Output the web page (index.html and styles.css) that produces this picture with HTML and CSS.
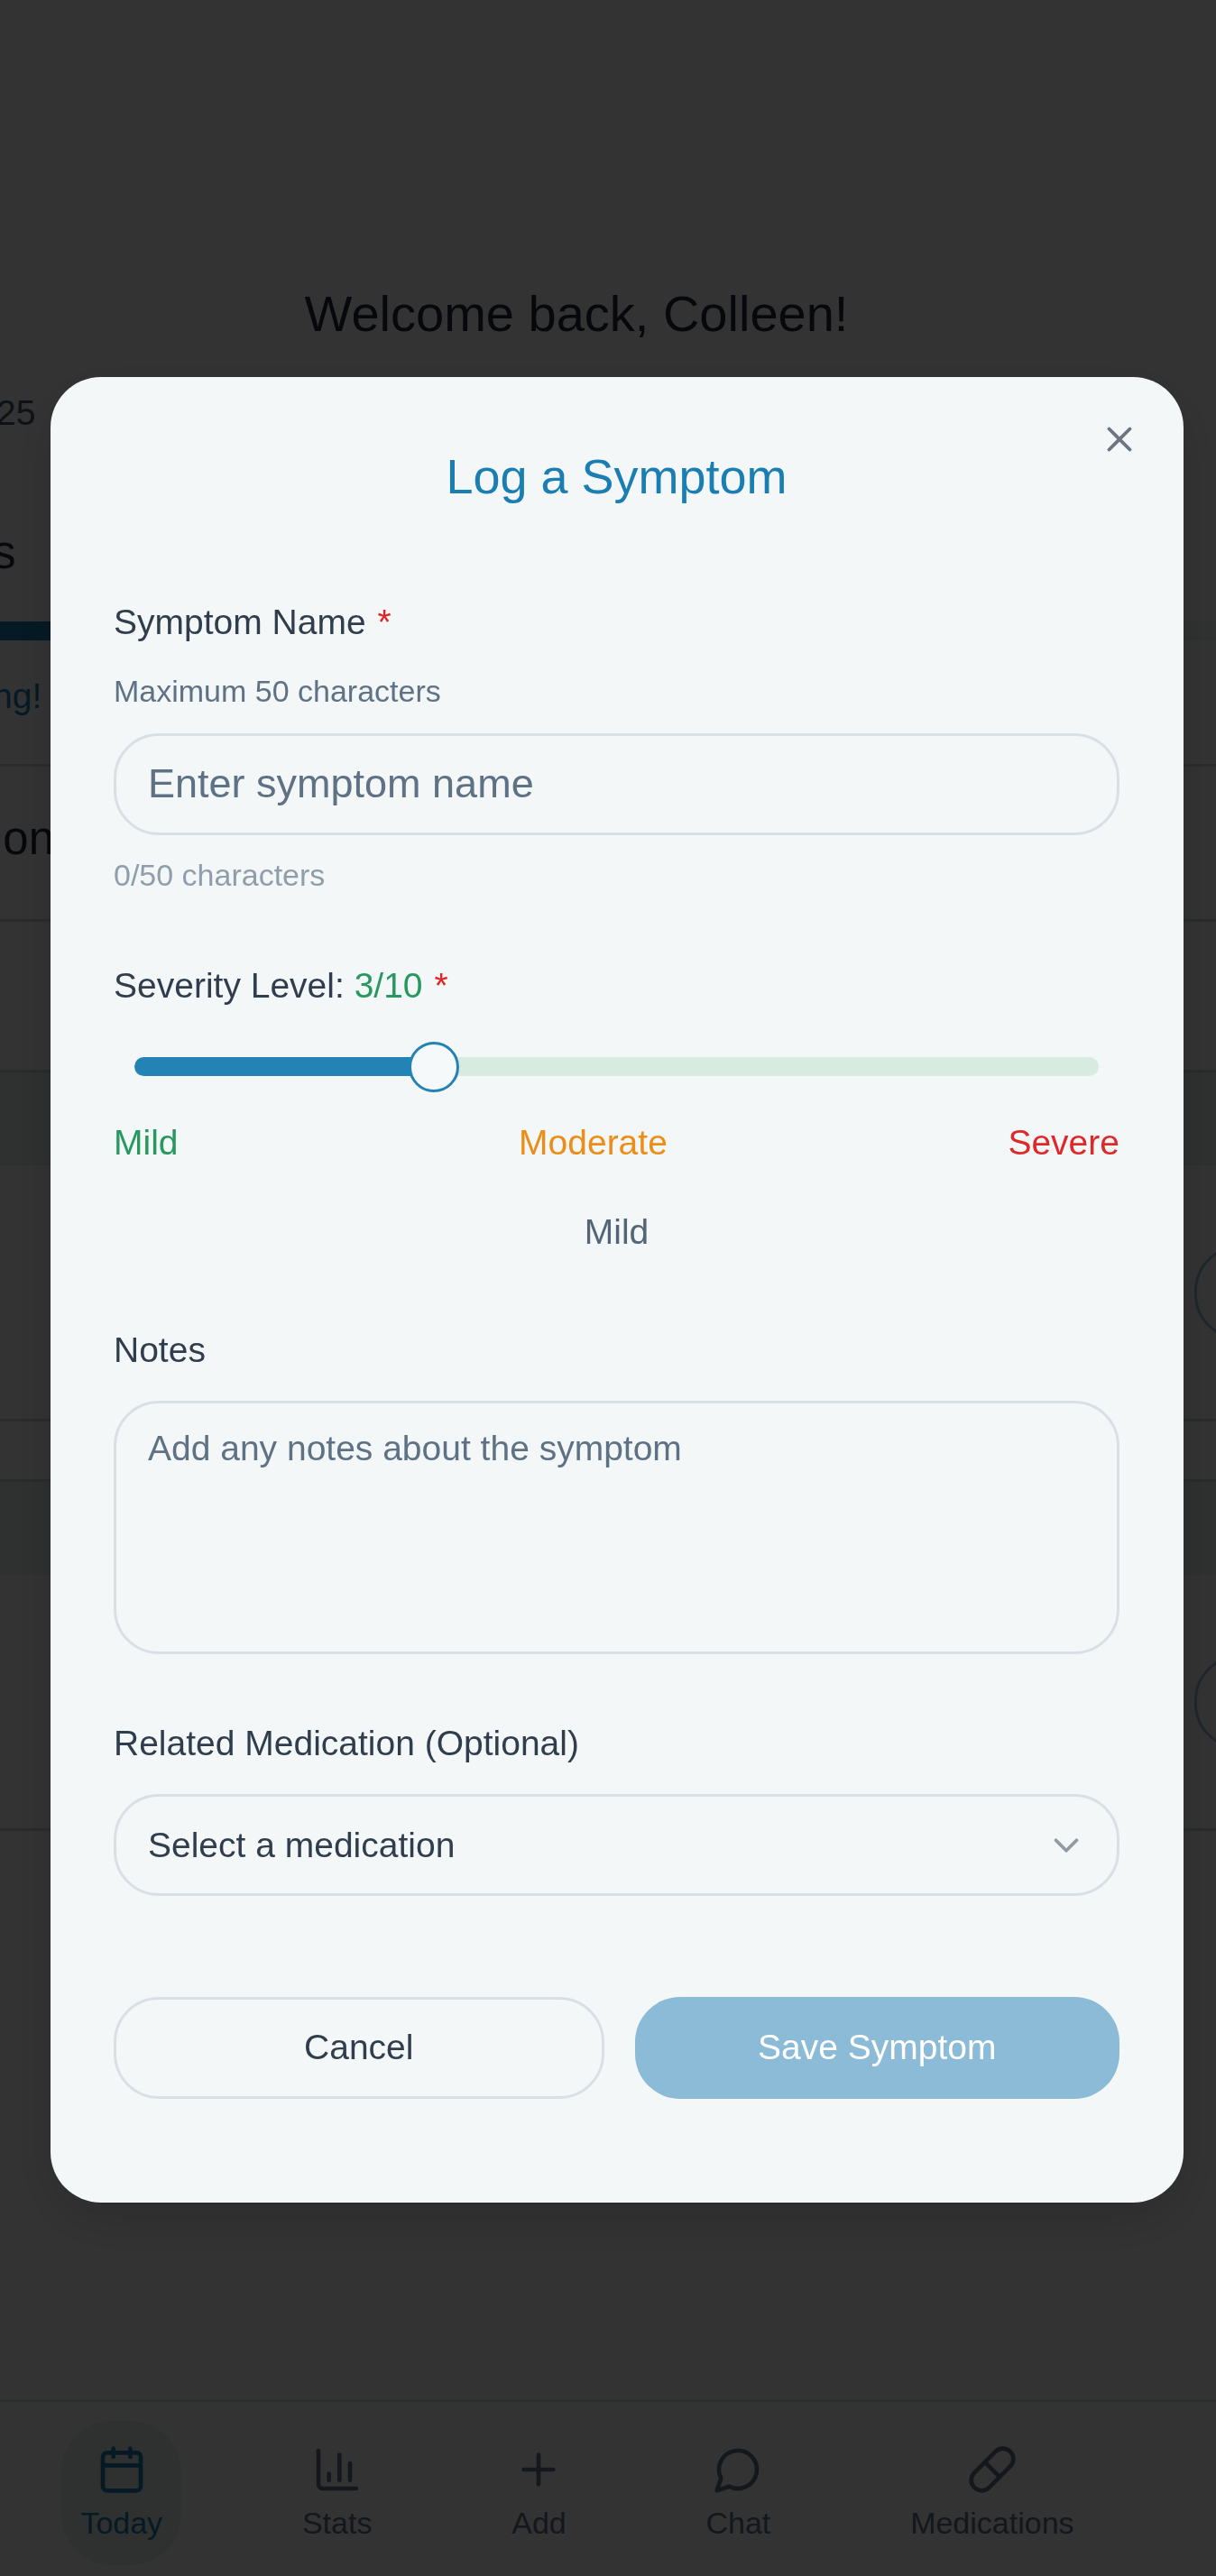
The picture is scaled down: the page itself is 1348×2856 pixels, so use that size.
FILE: index.html
```html
<!DOCTYPE html>
<html lang="en">
<head>
    <meta charset="UTF-8">
    <meta name="viewport" content="width=device-width, initial-scale=1.0">
    <title>Log a Symptom</title>
    <link rel="stylesheet" href="styles.css">
</head>
<body>
    <div class="app">
        <header class="summary">
            <h1>Welcome back, Colleen!</h1>
            <p class="date">25</p>
            <h2>s</h2>
            <div class="progress"><div class="progress-fill"></div></div>
            <p class="progress-note">ng!</p>
        </header>

        <div class="section-title">
            <h2>ion</h2>
        </div>

        <main>
            <section class="dose">
                <div class="dose-time"></div>
                <div class="dose-row"><button class="dose-button" aria-label="Take dose"></button></div>
            </section>
            <section class="dose">
                <div class="dose-time"></div>
                <div class="dose-row"><button class="dose-button" aria-label="Take dose"></button></div>
            </section>
        </main>

        <nav class="bottom-nav">
            <a href="#today" class="nav-item active">
                <svg class="icon" viewBox="0 0 24 24">
                    <path d="M8 2v4M16 2v4M3 10h18"/>
                    <rect x="3" y="4" width="18" height="18" rx="2"/>
                </svg>
                <span>Today</span>
            </a>
            <a href="#stats" class="nav-item">
                <svg class="icon" viewBox="0 0 24 24">
                    <path d="M3 3v16a2 2 0 0 0 2 2h16M18 17V9M13 17V5M8 17v-3"/>
                </svg>
                <span>Stats</span>
            </a>
            <a href="#add" class="nav-item">
                <svg class="icon" viewBox="0 0 24 24">
                    <path d="M5 12h14M12 5v14"/>
                </svg>
                <span>Add</span>
            </a>
            <a href="#chat" class="nav-item">
                <svg class="icon" viewBox="0 0 24 24">
                    <path d="M7.9 20A9 9 0 1 0 4 16.1L2 22Z"/>
                </svg>
                <span>Chat</span>
            </a>
            <a href="#medications" class="nav-item">
                <svg class="icon" viewBox="0 0 24 24">
                    <path d="m10.5 20.5 10-10a4.95 4.95 0 1 0-7-7l-10 10a4.95 4.95 0 1 0 7 7Z"/>
                    <path d="m8.5 8.5 7 7"/>
                </svg>
                <span>Medications</span>
            </a>
        </nav>
    </div>

    <div class="overlay">
        <div class="modal" role="dialog" aria-modal="true" aria-labelledby="modalTitle">
            <button class="close" aria-label="Close">
                <svg viewBox="0 0 24 24"><path d="M18 6 6 18M6 6l12 12"/></svg>
            </button>
            <h2 id="modalTitle" class="modal-title">Log a Symptom</h2>

            <form class="form">
                <div class="field">
                    <label for="symptomName">Symptom Name <span class="required">*</span></label>
                    <p class="hint">Maximum 50 characters</p>
                    <input type="text" id="symptomName" class="control" maxlength="50" placeholder="Enter symptom name">
                    <p class="counter">0/50 characters</p>
                </div>

                <div class="field">
                    <label for="severity">Severity Level: <span class="mild">3/10</span> <span class="required">*</span></label>
                    <input type="range" id="severity" class="slider" min="0" max="10" value="3">
                    <div class="scale">
                        <span class="mild">Mild</span>
                        <span class="moderate">Moderate</span>
                        <span class="severe">Severe</span>
                    </div>
                    <p class="severity-text">Mild</p>
                </div>

                <div class="field">
                    <label for="notes">Notes</label>
                    <textarea id="notes" class="control notes" placeholder="Add any notes about the symptom"></textarea>
                </div>

                <div class="field">
                    <label for="medication">Related Medication (Optional)</label>
                    <div class="select-wrap">
                        <select id="medication" class="control">
                            <option>Select a medication</option>
                        </select>
                        <svg class="chevron" viewBox="0 0 24 24"><path d="m6 9 6 6 6-6"/></svg>
                    </div>
                </div>

                <div class="actions">
                    <button type="button" class="btn btn-cancel">Cancel</button>
                    <button type="submit" class="btn btn-save" disabled>Save Symptom</button>
                </div>
            </form>
        </div>
    </div>
</body>
</html>
```

FILE: styles.css
```css
* {
    box-sizing: border-box;
    margin: 0;
    padding: 0;
}
body {
    font-family: "Liberation Sans", Arial, sans-serif;
    font-size: 39px;
    line-height: 56px;
    color: #1e293b;
    background-color: #fff;
}
h1, h2 {
    font-weight: normal;
}
button, input, textarea, select {
    font-family: inherit;
    font-size: inherit;
    color: inherit;
}

/* page behind the dialog */
.app {
    display: flex;
    flex-direction: column;
    min-height: 100vh;
    overflow: hidden;
}
.app h2 {
    font-size: 51px;
    line-height: 72px;
    margin-left: -8px;
}
.summary {
    padding: 316px 0 47px;
    border-bottom: 3px solid #cfdcdc;
}
.summary h1 {
    font-size: 56px;
    line-height: 64px;
    text-align: center;
    padding-right: 70px;
}
.date {
    margin: 50px 0 91px -4px;
    color: #475569;
}
.progress {
    height: 21px;
    margin: 40px 0 34px;
    background-color: #f0f8f5;
}
.progress-fill {
    width: 31%;
    height: 100%;
    background-color: #1c80b8;
}
.progress-note {
    margin-left: -8px;
    color: #1c80b8;
}
.section-title {
    padding: 44px 0 53px;
    border-bottom: 3px solid #cfdcdc;
    margin-bottom: 164px;
}
.dose {
    margin-bottom: 64px;
    border-top: 3px solid #cfdcdc;
    border-bottom: 3px solid #cfdcdc;
}
.dose-time {
    height: 103px;
    background-color: #e6f3ee;
}
.dose-row {
    display: flex;
    align-items: center;
    justify-content: flex-end;
    height: 281px;
}
.dose-button {
    width: 120px;
    height: 104px;
    margin-right: -96px;
    border: 3px solid #96bfd7;
    border-radius: 50px;
    background: none;
}
.bottom-nav {
    display: flex;
    justify-content: space-around;
    margin-top: auto;
    padding: 21px 80px 12px 12px;
    border-top: 3px solid #d8e8e2;
}
.nav-item {
    display: flex;
    flex-direction: column;
    align-items: center;
    gap: 11px;
    padding: 26px 21px 27px;
    border-radius: 56px;
    font-size: 34px;
    line-height: 40px;
    color: #64748b;
    text-decoration: none;
}
.nav-item.active {
    color: #1c80b8;
    background-color: #e6f3ee;
}
.icon {
    width: 56px;
    height: 56px;
}
svg {
    fill: none;
    stroke: currentColor;
    stroke-width: 2;
    stroke-linecap: round;
    stroke-linejoin: round;
}

/* dialog */
.overlay {
    position: fixed;
    inset: 0;
    display: flex;
    align-items: center;
    padding: 3px 36px 0 56px;
    background-color: rgba(0, 0, 0, 0.8);
}
.modal {
    position: relative;
    width: 100%;
    padding: 78px 71px 115px 70px;
    border-radius: 56px;
    background-color: #f3f7f8;
    box-shadow: 0 20px 60px rgba(0, 0, 0, 0.15);
}
.close {
    position: absolute;
    top: 46px;
    right: 48px;
    width: 46px;
    height: 46px;
    border: none;
    background: none;
    color: #6b7682;
    cursor: pointer;
}
.close svg {
    display: block;
    width: 46px;
    height: 46px;
}
.modal-title {
    margin-bottom: 102px;
    font-size: 54px;
    line-height: 64px;
    text-align: center;
    color: #1b7eb3;
}
.form {
    display: flex;
    flex-direction: column;
    gap: 71px;
}
.field {
    display: flex;
    flex-direction: column;
}
.field label {
    margin-bottom: 28px;
    color: #2f3d4d;
}
.required {
    margin-left: 2px;
    color: #e02424;
}
.hint, .counter {
    font-size: 34px;
    line-height: 48px;
}
.hint {
    margin: -4px 0 23px;
    color: #5f7285;
}
.counter {
    margin-top: 20px;
    color: #909eab;
}
.control {
    width: 100%;
    height: 113px;
    padding: 0 35px;
    border: 3px solid #d9e0e5;
    border-radius: 50px;
    background-color: transparent;
    outline: none;
}
.control::placeholder {
    color: #5f7285;
    opacity: 1;
}
input.control {
    font-size: 45px;
}
.notes {
    display: block;
    height: 281px;
    padding-top: 22px;
    line-height: 56px;
    resize: none;
}
.slider {
    appearance: none;
    -webkit-appearance: none;
    height: 56px;
    margin: 6px 23px 28px;
    background: none;
}
.slider::-webkit-slider-runnable-track {
    height: 21px;
    border-radius: 11px;
    background: linear-gradient(to right, #2483b5 31%, #d7ebe0 31%);
}
.slider::-webkit-slider-thumb {
    -webkit-appearance: none;
    width: 56px;
    height: 56px;
    margin-top: -17px;
    border: 3px solid #2483b5;
    border-radius: 50%;
    background-color: #f6f9fa;
}
.scale {
    display: flex;
    justify-content: space-between;
}
.mild {
    color: #27985f;
}
.moderate {
    color: #ec8d17;
}
.severe {
    color: #df2929;
}
.severity-text {
    margin-top: 43px;
    padding-bottom: 4px;
    text-align: center;
    color: #556577;
}
.select-wrap {
    position: relative;
}
.select-wrap select {
    display: block;
    appearance: none;
    -webkit-appearance: none;
    color: #2f3d4d;
}
.chevron {
    position: absolute;
    top: 34px;
    right: 36px;
    width: 46px;
    height: 46px;
    color: #929aa2;
    pointer-events: none;
}
.actions {
    display: flex;
    gap: 34px;
    padding-top: 41px;
}
.btn {
    flex: 1;
    height: 113px;
    border: none;
    border-radius: 50px;
    cursor: pointer;
}
.btn-cancel {
    border: 3px solid #d9e0e5;
    background: none;
    color: #2f3d4d;
}
.btn-save {
    background-color: #8bbbd6;
    color: #fff;
}
```
